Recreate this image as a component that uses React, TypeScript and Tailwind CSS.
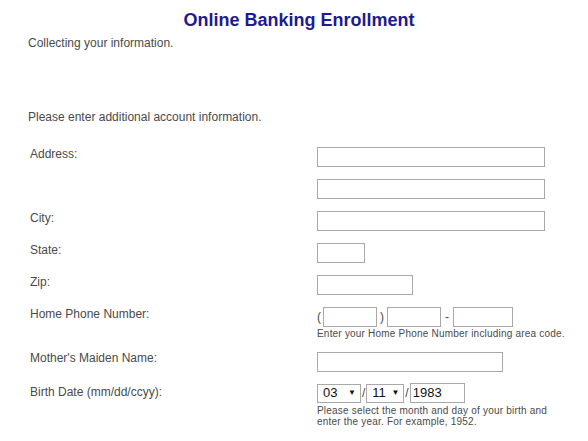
import React from 'react';

const font = { fontFamily: '"Liberation Sans", Arial, sans-serif' };

function Box({ w }: { w: string }) {
  return <div className={`h-[20px] border border-[#a9a9a9] bg-white ${w}`} />;
}

function Select({ value, w }: { value: string; w: string }) {
  return (
    <div className={`h-[19px] border border-[#a9a9a9] bg-white flex items-center justify-between pl-[5px] pr-[4px] text-[13px] text-[#111] ${w}`}>
      <span>{value}</span>
      <span className="text-[8px]">▼</span>
    </div>
  );
}

export default function App() {
  return (
    <div className="w-[588px] h-[441px] bg-white text-[#4a4a4a] text-[12px] leading-[14px]" style={font}>
      {/* Title */}
      <h1 className="pl-[10px] pt-[10px] text-center text-[18px] leading-[20px] font-bold text-[#1d1b8f]">
        Online Banking Enrollment
      </h1>
      <p className="pl-[28px] pt-[6px]">Collecting your information.</p>
      <p className="pl-[28px] pt-[60px]">Please enter additional account information.</p>

      {/* Form rows */}
      <div className="grid grid-cols-[287px_1fr] pl-[30px] pt-[23px] gap-y-[12px]">
        <span>Address:</span>
        <div className="flex flex-col gap-[12px]">
          <Box w="w-[228px]" />
          <Box w="w-[228px]" />
        </div>

        <span>City:</span>
        <Box w="w-[228px]" />

        <span>State:</span>
        <Box w="w-[48px]" />

        <span>Zip:</span>
        <Box w="w-[96px]" />

        <span>Home Phone Number:</span>
        <div>
          <div className="flex items-center gap-[2px]">
            <span>(</span>
            <Box w="w-[54px]" />
            <span className="px-[1px]">)</span>
            <Box w="w-[54px]" />
            <span className="px-[2px]">-</span>
            <Box w="w-[60px]" />
          </div>
          <p className="text-[10px] leading-[12px] tracking-[0.2px] mt-[1px] whitespace-nowrap">
            Enter your Home Phone Number including area code.
          </p>
        </div>

        <span className="-mt-[1px]">Mother's Maiden Name:</span>
        <Box w="w-[186px]" />

        <span className="pt-[1px]">Birth Date (mm/dd/ccyy):</span>
        <div className="-mt-[1px]">
          <div className="flex items-center">
            <Select value="03" w="w-[44px]" />
            <span className="px-[1px]">/</span>
            <Select value="11" w="w-[38px]" />
            <span className="px-[1px]">/</span>
            <div className="h-[20px] w-[55px] border border-[#a9a9a9] flex items-center pl-[2px] text-[13px] text-[#111]">1983</div>
          </div>
          <p className="text-[10px] leading-[11px] tracking-[0.2px] mt-[2px] w-[240px]">
            Please select the month and day of your birth and enter the year. For example, 1952.
          </p>
        </div>
      </div>
    </div>
  );
}
